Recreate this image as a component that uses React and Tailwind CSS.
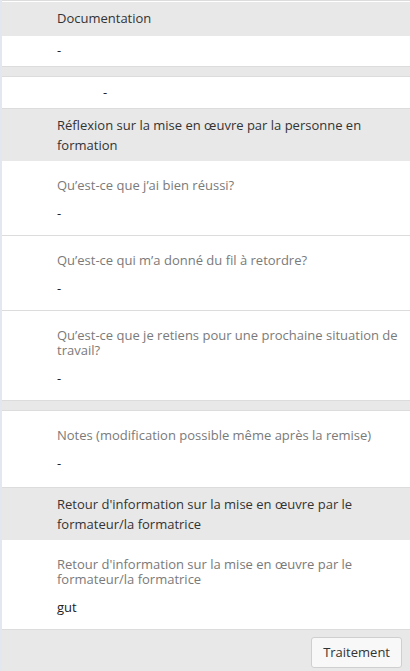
const labelRows = [
  { label: "Qu’est-ce que j’ai bien réussi?", value: "-" },
  { label: "Qu’est-ce qui m’a donné du fil à retordre?", value: "-" },
  { label: "Qu’est-ce que je retiens pour une prochaine situation de travail?", value: "-" },
];

function Header({ children, tall }) {
  return (
    <div
      className={`bg-[#e8e8e8] pl-[55px] pr-1 text-[13px] leading-[20px] text-[#333] ${tall ? "pt-[6px] pb-[8px]" : "py-[6px]"}`}
    >
      {children}
    </div>
  );
}

function Field({ label, value, roomy }) {
  return (
    <div
      className={`bg-white border-b border-[#dcdcdc] pl-[55px] pr-1 pt-[17px] ${roomy ? "pb-[14px]" : "pb-[12px]"}`}
    >
      <div className="text-[13px] leading-[15px] text-[#7a7a7a] mb-[10px]">{label}</div>
      <div className="text-[13px] leading-[20px] text-[#222]">{value}</div>
    </div>
  );
}

export default function App() {
  return (
    <div
      className="flex w-[410px] h-[671px] overflow-hidden bg-white"
      style={{ fontFamily: '"Open Sans", "Noto Sans", sans-serif' }}
    >
      <div className="w-[2px] shrink-0 bg-[#e3e8f0]" />
      <div className="flex-1 flex flex-col border-t border-[#dcdcdc]">
        <div className="h-px bg-white" />
        <Header tall>Documentation</Header>
        <div className="bg-white border-b border-[#dcdcdc] pl-[55px] pt-[5px] pb-[6px] text-[13px] leading-[19px] text-[#222]">
          -
        </div>
        <div className="h-[10px] bg-[#e8e8e8] border-b border-[#dcdcdc]" />
        <div className="bg-white border-b border-[#dcdcdc] pl-[101px] py-[6px] text-[13px] leading-[19px] text-[#222]">
          -
        </div>
        <Header>Réflexion sur la mise en œuvre par la personne en formation</Header>
        {labelRows.map((r) => (
          <Field key={r.label} label={r.label} value={r.value} />
        ))}
        <div className="h-[10px] bg-[#e8e8e8] border-b border-[#dcdcdc]" />
        <Field label="Notes (modification possible même après la remise)" value="-" roomy />
        <Header>Retour d'information sur la mise en œuvre par le formateur/la formatrice</Header>
        <Field
          label="Retour d'information sur la mise en œuvre par le formateur/la formatrice"
          value="gut"
        />
        <div className="flex-1 bg-[#e8e8e8] flex justify-end items-start pt-[7px] pr-[8px]">
          <button className="h-[31px] px-[11px] bg-[#f8f8f8] border border-[#cfcfcf] rounded-[3px] text-[13px] text-[#333]">
            Traitement
          </button>
        </div>
      </div>
    </div>
  );
}
